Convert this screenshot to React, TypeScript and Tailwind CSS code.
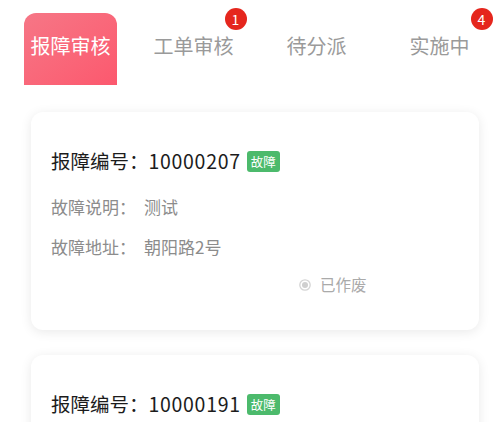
const font = { fontFamily: '"Noto Sans CJK SC", "Noto Sans", sans-serif' };

const tabs = [
  { label: '报障审核', active: true, badge: 0 },
  { label: '工单审核', active: false, badge: 1 },
  { label: '待分派', active: false, badge: 0 },
  { label: '实施中', active: false, badge: 4 },
];

interface Order {
  id: string;
  desc?: string;
  addr?: string;
  status?: string;
}

const orders: Order[] = [
  { id: '10000207', desc: '测试', addr: '朝阳路2号', status: '已作废' },
  { id: '10000191' },
];

function Tabs() {
  return (
    <div className="flex pl-[9px] pt-[13px] h-[85px]">
      {tabs.map((t) => (
        <div key={t.label} className="relative w-[123px] h-[72px] flex justify-center">
          {t.active ? (
            <div className="w-[93px] h-[72px] rounded-t-[12px] bg-gradient-to-br from-[#f67686] to-[#fc586e] flex justify-center pt-[19px]">
              <span className="text-[20px] leading-[28px] text-white">{t.label}</span>
            </div>
          ) : (
            <div className="pt-[19px]">
              <span className="text-[20px] leading-[28px] text-[#9a9a9a]">{t.label}</span>
            </div>
          )}
          {t.badge > 0 && (
            <span className="absolute top-[-5px] left-1/2 ml-[31px] w-[22px] h-[22px] rounded-full bg-[#e5261d] text-white text-[14px] leading-[22px] text-center">
              {t.badge}
            </span>
          )}
        </div>
      ))}
    </div>
  );
}

function OrderCard({ order }: { order: Order }) {
  return (
    <div className="bg-white rounded-[12px] shadow-[0_2px_12px_rgba(0,0,0,0.09)] px-[20px] pt-[35px] pb-[27px]">
      <div className="flex items-center h-[28px]">
        <span className="text-[19.5px] leading-[28px] text-[#1c1c1c]">
          报障编号：<span className="tracking-[0.7px]">{order.id}</span>
        </span>
        <span className="ml-[6px] h-[21px] px-[4px] rounded-[3px] bg-[#4cba6c] text-white text-[12.5px] leading-[21px]">故障</span>
      </div>
      {order.desc && (
        <>
          <div className="mt-[12px] h-[40px] flex items-center text-[17px] text-[#8c8c8c]">
            故障说明：<span className="ml-[8px]">{order.desc}</span>
          </div>
          <div className="h-[40px] flex items-center text-[17px] text-[#8c8c8c]">
            故障地址：<span className="ml-[8px]">{order.addr}</span>
          </div>
          <div className="h-[36px] flex items-center pl-[248px] text-[15.5px] text-[#aaaaaa]">
            <svg width="12" height="12" viewBox="0 0 12 12" className="mr-[9px]">
              <circle cx="6" cy="6" r="5.2" fill="none" stroke="#d4d4d4" strokeWidth="1.3" />
              <circle cx="6" cy="6" r="3" fill="#cfcfcf" />
            </svg>
            {order.status}
          </div>
        </>
      )}
    </div>
  );
}

export default function App() {
  return (
    <div className="w-[503px] h-[422px] overflow-hidden bg-white" style={font}>
      <Tabs />
      <div className="px-[31px] pr-[24px] pt-[27px] flex flex-col gap-[25px]">
        {orders.map((o) => (
          <OrderCard key={o.id} order={o} />
        ))}
      </div>
    </div>
  );
}
